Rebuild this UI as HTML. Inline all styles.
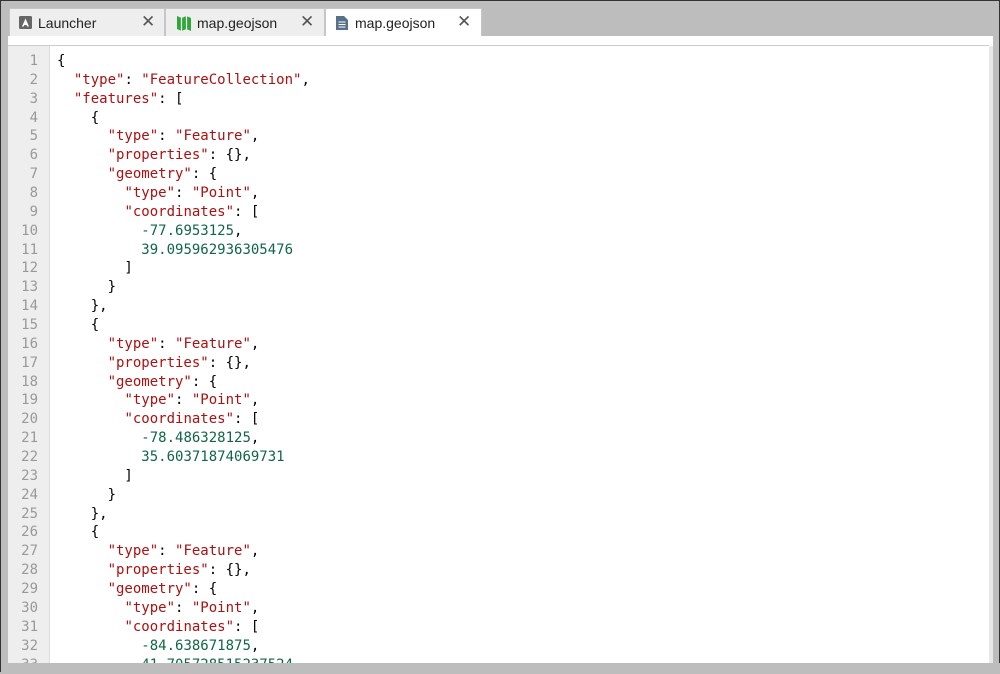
<!DOCTYPE html>
<html><head><meta charset="utf-8"><style>
html,body{margin:0;padding:0;}
body{width:1000px;height:672px;background:#bdbdbd;position:relative;overflow:hidden;border:1px solid #333;box-sizing:border-box;font-family:"Liberation Sans",sans-serif;}
.tab{position:absolute;top:7px;height:28px;background:#eeeeee;border:1px solid #c6c6c6;border-bottom:none;box-sizing:border-box;font-size:14px;color:#222;}
.tab span.t{position:absolute;top:6px;}
.tab .x{position:absolute;top:3px;font-size:17px;color:#555;}
.tab.act{background:#fff;height:29px;}
#main{position:absolute;left:7px;top:35px;width:985px;height:627px;background:#fff;}
#strip{position:absolute;left:0;top:0;width:981px;height:9px;background:#fff;border-bottom:1px solid #ccc;}
#gutter{position:absolute;left:0;top:10px;width:41px;height:617px;background:#eeeeee;border-right:1px solid #ddd;}
#sb{position:absolute;right:0;top:10px;width:4px;height:617px;background:#e8e8e8;}
pre{margin:0;position:absolute;top:16px;font-family:"DejaVu Sans Mono",monospace;font-size:14px;line-height:18.86px;}
#ln{left:0;width:30px;text-align:right;color:#999;}
#code{left:49px;color:#000;}
.s{color:#a11;}.n{color:#116644;}
</style></head><body>
<div class="tab" style="left:8px;width:156px;">
<svg style="position:absolute;left:9px;top:7px" width="13" height="13"><rect width="13" height="13" rx="1.5" fill="#666"/><path d="M6.5 2.5L3 10.5h1.8l.6-1.5h2.2l.6 1.5H10z" fill="#fff"/></svg>
<span class="t" style="left:28px">Launcher</span><span class="x" style="left:131px">✕</span></div>
<div class="tab" style="left:164px;width:160px;">
<svg style="position:absolute;left:10px;top:5px" width="16" height="18"><path d="M1 2l4.5 2 5-2 4.5 2v13l-4.5-2-5 2L1 15z" fill="#2fa83a"/><path d="M5.5 4v13M10.5 2v13" stroke="#fff" stroke-width="1.2"/></svg>
<span class="t" style="left:31px">map.geojson</span><span class="x" style="left:134px">✕</span></div>
<div class="tab act" style="left:324px;width:157px;">
<svg style="position:absolute;left:10px;top:7px" width="12" height="14"><path d="M0 0h8l4 4v10H0z" fill="#56718a"/><path d="M2.5 6h7M2.5 8.5h7M2.5 11h7" stroke="#fff" stroke-width="1.1"/></svg>
<span class="t" style="left:29px">map.geojson</span><span class="x" style="left:131px">✕</span></div>
<div id="main"><div id="strip"></div><div id="gutter"></div><div id="sb"></div>
<pre id="ln">1
2
3
4
5
6
7
8
9
10
11
12
13
14
15
16
17
18
19
20
21
22
23
24
25
26
27
28
29
30
31
32
33</pre>
<pre id="code">{
  <span class="s">"type"</span>: <span class="s">"FeatureCollection"</span>,
  <span class="s">"features"</span>: [
    {
      <span class="s">"type"</span>: <span class="s">"Feature"</span>,
      <span class="s">"properties"</span>: {},
      <span class="s">"geometry"</span>: {
        <span class="s">"type"</span>: <span class="s">"Point"</span>,
        <span class="s">"coordinates"</span>: [
          <span class="n">-77.6953125</span>,
          <span class="n">39.095962936305476</span>
        ]
      }
    },
    {
      <span class="s">"type"</span>: <span class="s">"Feature"</span>,
      <span class="s">"properties"</span>: {},
      <span class="s">"geometry"</span>: {
        <span class="s">"type"</span>: <span class="s">"Point"</span>,
        <span class="s">"coordinates"</span>: [
          <span class="n">-78.486328125</span>,
          <span class="n">35.60371874069731</span>
        ]
      }
    },
    {
      <span class="s">"type"</span>: <span class="s">"Feature"</span>,
      <span class="s">"properties"</span>: {},
      <span class="s">"geometry"</span>: {
        <span class="s">"type"</span>: <span class="s">"Point"</span>,
        <span class="s">"coordinates"</span>: [
          <span class="n">-84.638671875</span>,
          <span class="n">41.705728515237524</span></pre>
</div>
<div style="position:absolute;left:0;top:662px;width:1000px;height:10px;background:#bdbdbd;"></div>
</body></html>
